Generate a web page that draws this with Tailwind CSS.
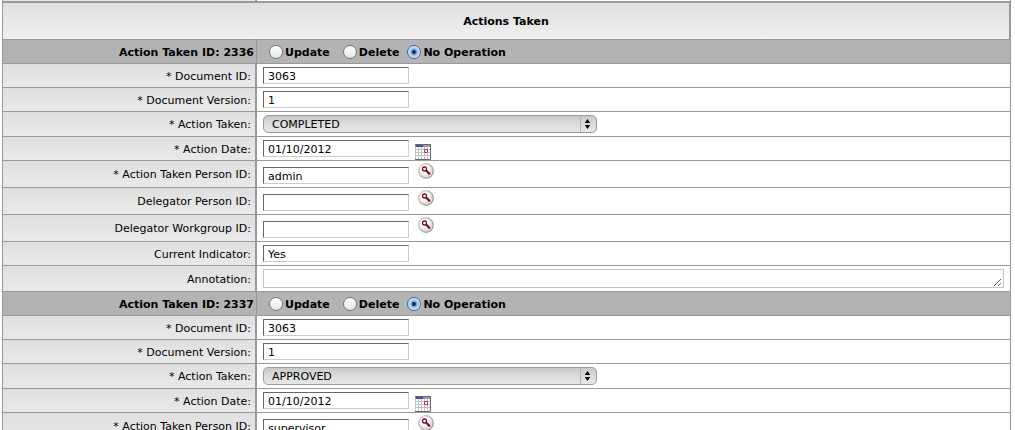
<!DOCTYPE html>
<html lang="en">
<head>
<meta charset="utf-8">
<title>Actions Taken</title>
<script src="https://cdn.jsdelivr.net/npm/@tailwindcss/browser@4"></script>
</head>
<body class="h-screen overflow-hidden bg-white pr-1 pl-0.5 font-['Verdana','DejaVu_Sans',sans-serif] text-[11px] leading-4 text-black">
<svg class="absolute size-0" aria-hidden="true">
  <defs>
    <linearGradient id="ring" x2="1" y2="1"><stop stop-color="#d0d2d4"/><stop offset="1" stop-color="#8c9096"/></linearGradient>
    <radialGradient id="disc" cx=".4" cy=".35"><stop offset=".5" stop-color="#fff"/><stop offset="1" stop-color="#dcdcdc"/></radialGradient>
  </defs>
  <symbol id="calendar" viewBox="0 0 16 16">
    <path fill="#fff" d="M0 0h16v16H0z"/>
    <path fill="none" stroke="#c4c4c4" d="M.5 3v12M3.500 3v12M6.500 3v12M9.500 3v12M12.500 3v12M0 5.500h15M0 8.500h15M0 11.500h15"/>
    <path fill="#a0a0a0" d="M0 0h16v3H0z"/>
    <path fill="#4848b0" d="M1 1h7v2H1z"/>
    <path fill="none" stroke="#666" d="M0 .5h15.500v15H0"/>
    <path fill="#fff" stroke="#b83248" d="M9.500 5.500h3v3h-3z"/>
  </symbol>
  <symbol id="lens" viewBox="0 0 16 16">
    <circle cx="8" cy="8" r="7.300" fill="url(#disc)" stroke="url(#ring)" stroke-width="1.300"/>
    <circle cx="6.500" cy="6" r="2" fill="#fff" stroke="#7a0c14" stroke-width="1.300"/>
    <path fill="none" stroke="#7a0c14" stroke-width="2.200" stroke-linecap="round" d="M8.600 8l2.700 2.700"/>
  </symbol>
  <symbol id="stepper" viewBox="0 0 17 18">
    <path stroke="#b4b4b4" d="M.5 1v16"/>
    <path d="M7.500 4l2.700 4H4.800zM7.500 14l2.700-4H4.800z"/>
  </symbol>
  <symbol id="grip" viewBox="0 0 8 8"><path stroke="#666" d="M0 8l7-7M4 8l3-3"/></symbol>
</svg>

<table class="w-full table-fixed border-separate border-spacing-0 border-x border-[#999]
  [&_th]:p-0 [&_td]:p-0 [&_th]:border-[#999] [&_td]:border-[#999] [&_td]:border-b [&_td]:px-1.5 [&_td]:align-top
  [&_th]:pt-0.5 [&_tbody_th]:border-b [&_tbody_th]:border-r-2 [&_tbody_th]:bg-linear-to-b [&_tbody_th]:from-[#dfdfdf] [&_tbody_th]:to-[#e9e9e9] [&_tbody_th]:pr-1 [&_tbody_th]:text-right [&_tbody_th]:font-normal
  [&_input[type=text]]:block [&_input[type=text]]:h-[17px] [&_input[type=text]]:w-[146px] [&_input[type=text]]:border [&_input[type=text]]:border-t-[#666] [&_input[type=text]]:border-l-[#666] [&_input[type=text]]:border-r-[#ccc] [&_input[type=text]]:border-b-[#ccc] [&_input[type=text]]:bg-white [&_input[type=text]]:px-1 [&_input[type=text]]:pt-0.5
  [&_input[type=radio]]:size-3.5 [&_input[type=radio]]:appearance-none [&_input[type=radio]]:rounded-full [&_input[type=radio]]:border [&_input[type=radio]]:border-[#777] [&_input[type=radio]]:bg-linear-to-b [&_input[type=radio]]:from-white [&_input[type=radio]]:to-[#e4e4e4] [&_input[type=radio]:checked]:border-[#4b6288] [&_input[type=radio]:checked]:bg-[radial-gradient(circle,#101c38_0_1px,#8dbcf0_3px,#d5ebff_6px)]
  [&_label]:inline-flex [&_label]:items-center
  [&_select]:block [&_select]:h-[18px] [&_select]:w-full [&_select]:appearance-none [&_select]:rounded-[5px] [&_select]:border [&_select]:border-[#999] [&_select]:bg-linear-to-b [&_select]:from-[#c9c9c9] [&_select]:via-[#dcdcdc] [&_select]:to-[#e6e6e6] [&_select]:px-2 [&_select]:pt-px [&_select]:leading-4">
  <colgroup><col class="w-[254px]"><col></colgroup>
  <thead>
    <tr class="h-[3px]"><td class="border-r-2 !border-b-2 bg-[#e9e9e9]"></td><td class="!border-b-2"></td></tr>
    <tr class="h-[37px]"><th colspan="2" class="border-r border-b bg-linear-to-b from-[#dfdfdf] to-[#efefef] text-center font-bold">Actions Taken</th></tr>
  </thead>
  <tbody>
    <tr class="h-6 bg-[#b3b3b3] font-bold">
      <th scope="rowgroup" class="!border-r !bg-none !pr-0.5 !font-bold">Action Taken ID: 2336</th>
      <td><div class="flex h-[23px] items-center pl-1.5">
        <label class="mr-[13px] gap-0.5"><input type="radio" name="op1"><span class="pt-0.5">Update</span></label>
        <label class="mr-2 gap-0.5"><input type="radio" name="op1"><span class="pt-0.5">Delete</span></label>
        <label class="gap-0.5"><input type="radio" name="op1" checked><span class="pt-0.5">No Operation</span></label>
      </div></td>
    </tr>
    <tr class="h-6"><th scope="row"><label for="doc1">* Document ID:</label></th><td class="!pt-[3px]"><input type="text" id="doc1" value="3063"></td></tr>
    <tr class="h-6"><th scope="row"><label for="ver1">* Document Version:</label></th><td class="!pt-[3px]"><input type="text" id="ver1" value="1"></td></tr>
    <tr class="h-[25px]"><th scope="row"><label for="act1">* Action Taken:</label></th><td class="!pt-[3px]"><div class="relative w-[334px]"><select id="act1"><option>COMPLETED</option><option>APPROVED</option></select><svg class="pointer-events-none absolute top-0 right-0 h-[18px] w-[17px]"><use href="#stepper"/></svg></div></td></tr>
    <tr class="h-6"><th scope="row"><label for="date1">* Action Date:</label></th><td class="!pt-[3px]"><div class="flex h-5 gap-1.5"><input type="text" id="date1" value="01/10/2012"><button type="button" aria-label="Pick date" class="size-4 self-end"><svg class="block size-4"><use href="#calendar"/></svg></button></div></td></tr>
    <tr class="h-[27px]"><th scope="row"><label for="person1">* Action Taken Person ID:</label></th><td class="!pt-0.5"><div class="flex h-[21px] gap-[9px]"><input type="text" id="person1" value="admin" class="self-end"><button type="button" aria-label="Look up person" class="size-4"><svg class="block size-4"><use href="#lens"/></svg></button></div></td></tr>
    <tr class="h-[27px]"><th scope="row"><label for="del1">Delegator Person ID:</label></th><td class="!pt-0.5"><div class="flex h-[21px] gap-[9px]"><input type="text" id="del1" class="self-end"><button type="button" aria-label="Look up delegator" class="size-4"><svg class="block size-4"><use href="#lens"/></svg></button></div></td></tr>
    <tr class="h-[27px]"><th scope="row"><label for="grp1">Delegator Workgroup ID:</label></th><td class="!pt-0.5"><div class="flex h-[21px] gap-[9px]"><input type="text" id="grp1" class="self-end"><button type="button" aria-label="Look up workgroup" class="size-4"><svg class="block size-4"><use href="#lens"/></svg></button></div></td></tr>
    <tr class="h-6"><th scope="row"><label for="cur1">Current Indicator:</label></th><td class="!pt-[3px]"><input type="text" id="cur1" value="Yes"></td></tr>
    <tr class="h-[26px]"><th scope="row"><label for="note1">Annotation:</label></th><td class="!pt-[3px]"><div class="relative"><textarea id="note1" rows="1" class="block h-[19px] w-full resize-none overflow-hidden border border-[#c4c4c4] bg-white px-1"></textarea><svg class="pointer-events-none absolute right-0.5 bottom-0.5 size-2"><use href="#grip"/></svg></div></td></tr>

    <tr class="h-6 bg-[#b3b3b3] font-bold">
      <th scope="rowgroup" class="!border-r !bg-none !pr-0.5 !font-bold">Action Taken ID: 2337</th>
      <td><div class="flex h-[23px] items-center pl-1.5">
        <label class="mr-[13px] gap-0.5"><input type="radio" name="op2"><span class="pt-0.5">Update</span></label>
        <label class="mr-2 gap-0.5"><input type="radio" name="op2"><span class="pt-0.5">Delete</span></label>
        <label class="gap-0.5"><input type="radio" name="op2" checked><span class="pt-0.5">No Operation</span></label>
      </div></td>
    </tr>
    <tr class="h-6"><th scope="row"><label for="doc2">* Document ID:</label></th><td class="!pt-[3px]"><input type="text" id="doc2" value="3063"></td></tr>
    <tr class="h-6"><th scope="row"><label for="ver2">* Document Version:</label></th><td class="!pt-[3px]"><input type="text" id="ver2" value="1"></td></tr>
    <tr class="h-[25px]"><th scope="row"><label for="act2">* Action Taken:</label></th><td class="!pt-[3px]"><div class="relative w-[334px]"><select id="act2"><option>APPROVED</option><option>COMPLETED</option></select><svg class="pointer-events-none absolute top-0 right-0 h-[18px] w-[17px]"><use href="#stepper"/></svg></div></td></tr>
    <tr class="h-6"><th scope="row"><label for="date2">* Action Date:</label></th><td class="!pt-[3px]"><div class="flex h-5 gap-1.5"><input type="text" id="date2" value="01/10/2012"><button type="button" aria-label="Pick date" class="size-4 self-end"><svg class="block size-4"><use href="#calendar"/></svg></button></div></td></tr>
    <tr class="h-[27px]"><th scope="row"><label for="person2">* Action Taken Person ID:</label></th><td class="!pt-0.5"><div class="flex h-[21px] gap-[9px]"><input type="text" id="person2" value="supervisor" class="self-end"><button type="button" aria-label="Look up person" class="size-4"><svg class="block size-4"><use href="#lens"/></svg></button></div></td></tr>
  </tbody>
</table>
</body>
</html>
